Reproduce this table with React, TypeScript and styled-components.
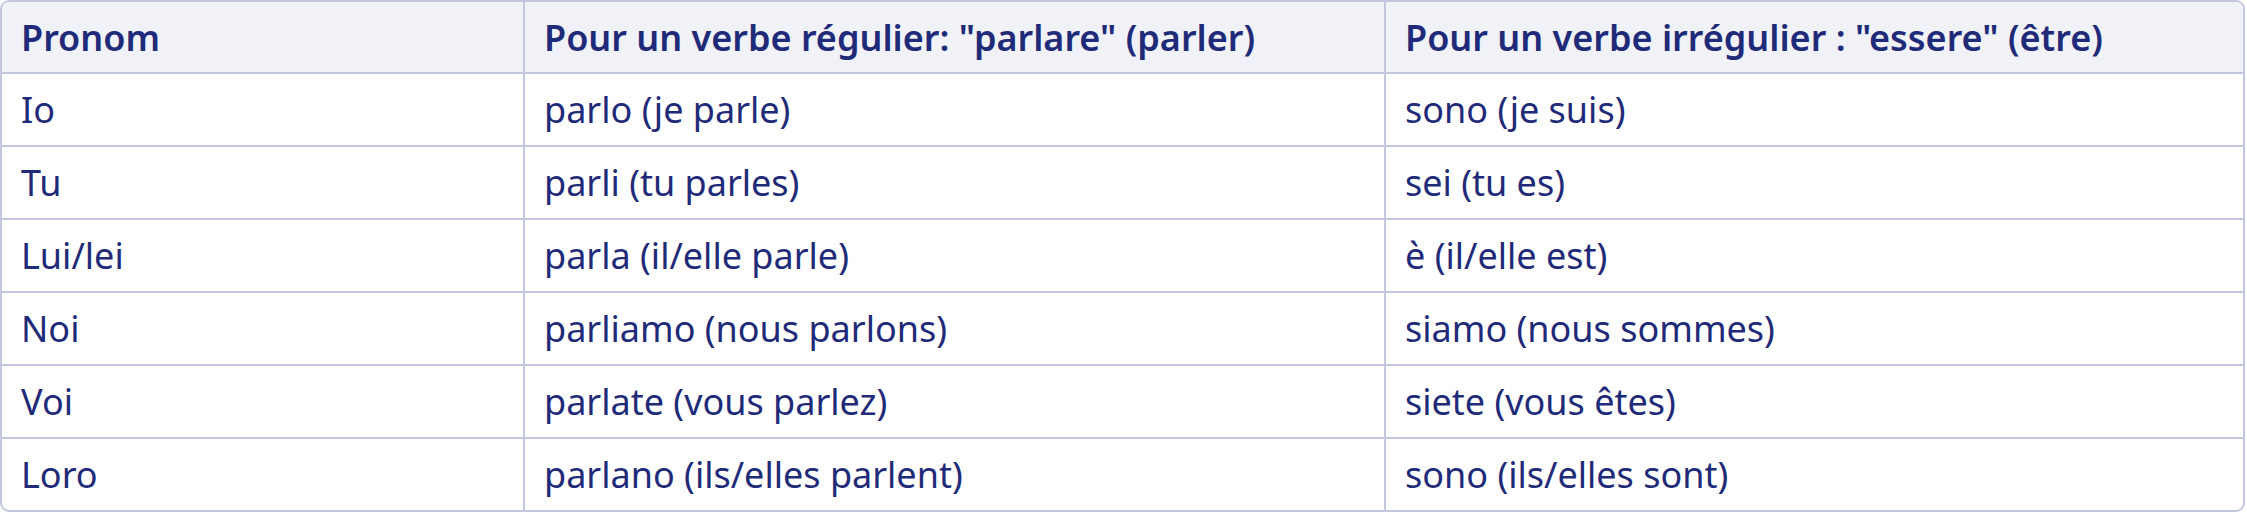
import * as React from "react";
import styled, { createGlobalStyle } from "styled-components";

type Row = { pronom: string; regular: string; irregular: string };

const rows: Row[] = [
  { pronom: "Io", regular: "parlo (je parle)", irregular: "sono (je suis)" },
  { pronom: "Tu", regular: "parli (tu parles)", irregular: "sei (tu es)" },
  { pronom: "Lui/lei", regular: "parla (il/elle parle)", irregular: "è (il/elle est)" },
  { pronom: "Noi", regular: "parliamo (nous parlons)", irregular: "siamo (nous sommes)" },
  { pronom: "Voi", regular: "parlate (vous parlez)", irregular: "siete (vous êtes)" },
  { pronom: "Loro", regular: "parlano (ils/elles parlent)", irregular: "sono (ils/elles sont)" }
];

const GlobalStyle = createGlobalStyle`
  html, body {
    margin: 0;
    padding: 0;
    background: #ffffff;
  }
`;

const Table = styled.table`
  width: 2245px;
  table-layout: fixed;
  border-collapse: separate;
  border-spacing: 0;
  border: 2px solid #c2c7df;
  border-radius: 9px;
  overflow: hidden;
  font-family: "Noto Sans", "Open Sans", sans-serif;
  font-size: 36px;
  color: #1f2b78;
`;

const Cell = styled.td<{ $last?: boolean; $bottom?: boolean }>`
  height: 71px;
  padding: 0 19px;
  box-sizing: content-box;
  vertical-align: middle;
  text-align: left;
  white-space: nowrap;
  line-height: normal;
  border-right: ${(p) => (p.$last ? "none" : "2px solid #c2c7df")};
  border-bottom: ${(p) => (p.$bottom ? "none" : "2px solid #c2c7df")};
`;

const HeadCell = styled(Cell).attrs({ as: "th" })`
  height: 70px;
  font-weight: 600;
  background: #f1f2f8;
`;

const App: React.FunctionComponent = () => {
  return (
    <>
      <GlobalStyle />
      <Table>
        <colgroup>
          <col style={{ width: 523 }} />
          <col style={{ width: 861 }} />
          <col />
        </colgroup>
        <thead>
          <tr>
            <HeadCell>Pronom</HeadCell>
            <HeadCell>Pour un verbe régulier: "parlare" (parler)</HeadCell>
            <HeadCell $last>Pour un verbe irrégulier : "essere" (être)</HeadCell>
          </tr>
        </thead>
        <tbody>
          {rows.map((row, i) => {
            const bottom = i === rows.length - 1;
            return (
              <tr key={row.pronom}>
                <Cell $bottom={bottom}>{row.pronom}</Cell>
                <Cell $bottom={bottom}>{row.regular}</Cell>
                <Cell $bottom={bottom} $last>
                  {row.irregular}
                </Cell>
              </tr>
            );
          })}
        </tbody>
      </Table>
    </>
  );
};

export default App;
